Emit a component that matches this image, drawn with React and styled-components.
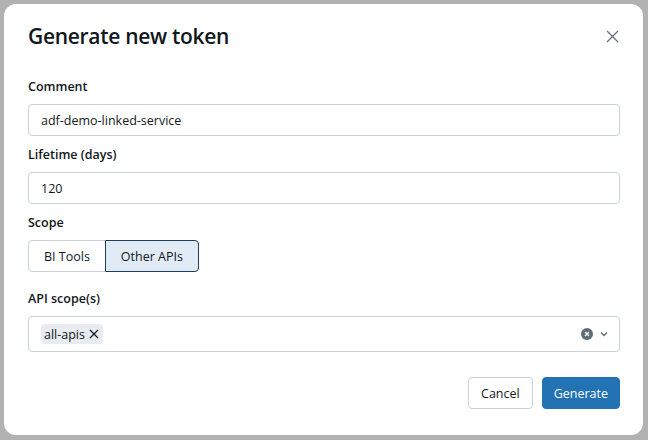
import React from 'react';
import styled, { createGlobalStyle } from 'styled-components';

const GlobalStyle = createGlobalStyle`
  html, body {
    margin: 0;
    padding: 0;
    background: #b2b2b2;
    font-family: "Open Sans", "Noto Sans", Arial, sans-serif;
    color: #1f2328;
  }
`;

const Backdrop = styled.div`
  width: 648px;
  height: 440px;
  padding: 4px 5px 5px 4px;
  box-sizing: border-box;
`;

const Modal = styled.div`
  height: 100%;
  background: #fff;
  border-radius: 12px;
  padding: 17px 23px 0 24px;
  box-sizing: border-box;
`;

const Header = styled.div`
  display: flex;
  align-items: center;
  justify-content: space-between;
  height: 30px;
  margin-bottom: 27px;
`;

const Title = styled.h1`
  margin: 0;
  font-size: 21px;
  font-weight: 600;
  color: #11171c;
  letter-spacing: -0.3px;
`;

const CloseButton = styled.button`
  border: 0;
  background: none;
  padding: 0;
  width: 16px;
  height: 16px;
  display: flex;
  align-items: center;
  justify-content: center;
  color: #6a737b;
`;

const Field = styled.div`
  display: flex;
  flex-direction: column;
  margin-bottom: ${({ $gap }) => $gap ?? 10}px;
`;

const Label = styled.label`
  font-size: 12.5px;
  font-weight: 600;
  color: #11171c;
  line-height: 18px;
  margin-bottom: 8px;
`;

const Input = styled.div`
  height: 32px;
  box-sizing: border-box;
  border: 1px solid #cbd2d9;
  border-radius: 4px;
  padding: 0 12px;
  display: flex;
  align-items: center;
  font-size: 12.5px;
  color: #11171c;
`;

const Segmented = styled.div`
  display: flex;
`;

const Segment = styled.button`
  height: 32px;
  box-sizing: border-box;
  font-family: inherit;
  font-size: 12.5px;
  padding: 0 15px;
  background: ${({ $active }) => ($active ? '#e0ebf5' : '#fff')};
  border: 1px solid ${({ $active }) => ($active ? '#1f3c5c' : '#cbd2d9')};
  border-radius: ${({ $first }) => ($first ? '4px 0 0 4px' : '0 4px 4px 0')};
  margin-left: ${({ $first }) => ($first ? 0 : -1)}px;
  color: #11171c;
`;

const Select = styled.div`
  height: 36px;
  box-sizing: border-box;
  border: 1px solid #cbd2d9;
  border-radius: 4px;
  padding: 0 10px 0 12px;
  display: flex;
  align-items: center;
  justify-content: space-between;
`;

const Tag = styled.span`
  display: inline-flex;
  align-items: center;
  gap: 4px;
  height: 20px;
  padding: 0 4px 0 3px;
  background: #e8ecf0;
  border-radius: 4px;
  font-size: 12.5px;
  color: #11171c;
`;

const SelectIcons = styled.div`
  display: flex;
  align-items: center;
  gap: 6px;
`;

const Footer = styled.div`
  display: flex;
  justify-content: flex-end;
  gap: 9px;
  margin-top: 25px;
`;

const Button = styled.button`
  height: 32px;
  box-sizing: border-box;
  padding: 0 ${({ $primary }) => ($primary ? 11 : 12)}px;
  font-family: inherit;
  font-size: 12.5px;
  border-radius: 4px;
  border: 1px solid ${({ $primary }) => ($primary ? '#2272b4' : '#cbd2d9')};
  background: ${({ $primary }) => ($primary ? '#2272b4' : '#fff')};
  color: ${({ $primary }) => ($primary ? '#fff' : '#11171c')};
  font-weight: ${({ $primary }) => ($primary ? 500 : 400)};
`;

const App = () => (
  <Backdrop>
    <GlobalStyle />
    <Modal>
      <Header>
        <Title>Generate new token</Title>
        <CloseButton aria-label="Close">
          <svg width="13" height="13" viewBox="0 0 13 13">
            <path d="M1 1L12 12M12 1L1 12" stroke="currentColor" strokeWidth="1.3" />
          </svg>
        </CloseButton>
      </Header>

      <Field>
        <Label>Comment</Label>
        <Input>adf-demo-linked-service</Input>
      </Field>

      <Field>
        <Label>Lifetime (days)</Label>
        <Input>120</Input>
      </Field>

      <Field $gap={18}>
        <Label>Scope</Label>
        <Segmented>
          <Segment $first>BI Tools</Segment>
          <Segment $active>Other APIs</Segment>
        </Segmented>
      </Field>

      <Field $gap={0}>
        <Label>API scope(s)</Label>
        <Select>
          <Tag>
            all-apis
            <svg width="10" height="10" viewBox="0 0 10 10">
              <path d="M1 1L9 9M9 1L1 9" stroke="#11171c" strokeWidth="1.2" />
            </svg>
          </Tag>
          <SelectIcons>
            <svg width="12" height="12" viewBox="0 0 12 12">
              <circle cx="6" cy="6" r="6" fill="#5f6b75" />
              <path d="M4 4L8 8M8 4L4 8" stroke="#fff" strokeWidth="1.3" />
            </svg>
            <svg width="10" height="10" viewBox="0 0 10 10">
              <path d="M2 3.5L5 6.5L8 3.5" stroke="#5f6b75" strokeWidth="1.3" fill="none" />
            </svg>
          </SelectIcons>
        </Select>
      </Field>

      <Footer>
        <Button>Cancel</Button>
        <Button $primary>Generate</Button>
      </Footer>
    </Modal>
  </Backdrop>
);

export default App;
